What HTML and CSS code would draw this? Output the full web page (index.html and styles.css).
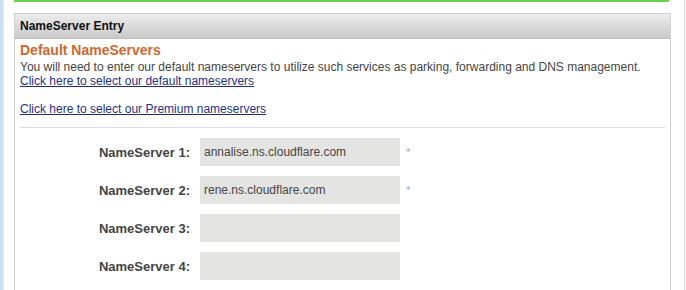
FILE: index.html
```html
<!DOCTYPE html>
<html lang="en">
<head>
    <meta charset="UTF-8">
    <title>NameServer Entry</title>
    <link rel="stylesheet" href="styles.css">
</head>
<body>
    <div class="page">
        <div class="side-strip"></div>
        <div class="main">
            <div class="status-box"></div>

            <div class="panel">
                <div class="panel-header">NameServer Entry</div>
                <div class="panel-body">
                    <h2>Default NameServers</h2>
                    <p class="intro">You will need to enter our default nameservers to utilize such services as parking, forwarding and DNS management.</p>
                    <a href="#" class="ns-link">Click here to select our default nameservers</a>
                    <a href="#" class="ns-link premium">Click here to select our Premium nameservers</a>

                    <div class="ns-form">
                        <div class="ns-row">
                            <label>NameServer 1:</label>
                            <input type="text" value="annalise.ns.cloudflare.com">
                            <span class="req">*</span>
                        </div>
                        <div class="ns-row">
                            <label>NameServer 2:</label>
                            <input type="text" value="rene.ns.cloudflare.com">
                            <span class="req">*</span>
                        </div>
                        <div class="ns-row">
                            <label>NameServer 3:</label>
                            <input type="text" value="">
                        </div>
                        <div class="ns-row">
                            <label>NameServer 4:</label>
                            <input type="text" value="">
                        </div>
                    </div>
                </div>
            </div>
        </div>
        <div class="right-frame"></div>
    </div>
</body>
</html>
```

FILE: styles.css
```css
body {
    font-family: "Liberation Sans", Arial, sans-serif;
    margin: 0;
    background-color: #fff;
    color: #444;
}
.page {
    display: flex;
    height: 290px;
    overflow: hidden;
}
.side-strip {
    width: 4px;
    background: linear-gradient(to right, #c4dbf5, #dde9f8);
}
.main {
    width: 657px;
    padding-left: 10px;
}
.right-frame {
    width: 1px;
    margin-left: 13px;
    background-color: #d6d6d6;
}
.status-box {
    height: 0;
    width: 655px;
    border-bottom: 2px solid #6ad14a;
    margin-bottom: 11px;
}
.panel {
    border: 1px solid #cfcfcf;
    border-bottom: none;
    height: 300px;
}
.panel-header {
    height: 24px;
    line-height: 24px;
    padding-left: 5px;
    font-size: 12px;
    font-weight: bold;
    color: #111;
    background: linear-gradient(to bottom, #ececec, #c9c9c9);
    border-bottom: 1px solid #bdbdbd;
}
.panel-body {
    padding: 3px 5px 0;
}
.panel-body h2 {
    margin: 0;
    font-size: 14px;
    line-height: 17px;
    color: #d0682f;
}
.intro {
    margin: 1px 0 0;
    font-size: 12px;
    line-height: 14px;
}
.ns-link {
    display: block;
    font-size: 12px;
    line-height: 14px;
    color: #1f2f86;
}
.ns-link.premium {
    margin-top: 14px;
}
.ns-form {
    border-top: 1px solid #dcdcdc;
    margin-top: 11px;
    padding-top: 10px;
}
.ns-row {
    display: flex;
    align-items: center;
    margin-bottom: 10px;
}
.ns-row label {
    width: 170px;
    text-align: right;
    font-size: 13px;
    font-weight: bold;
    color: #444;
}
.ns-row input {
    width: 200px;
    height: 28px;
    box-sizing: border-box;
    margin-left: 10px;
    padding: 0 4px;
    border: none;
    background-color: #e4e4e2;
    font-family: "Liberation Sans", Arial, sans-serif;
    font-size: 12px;
    color: #444;
}
.req {
    margin-left: 6px;
    font-size: 11px;
    color: #8eaee6;
}
```
